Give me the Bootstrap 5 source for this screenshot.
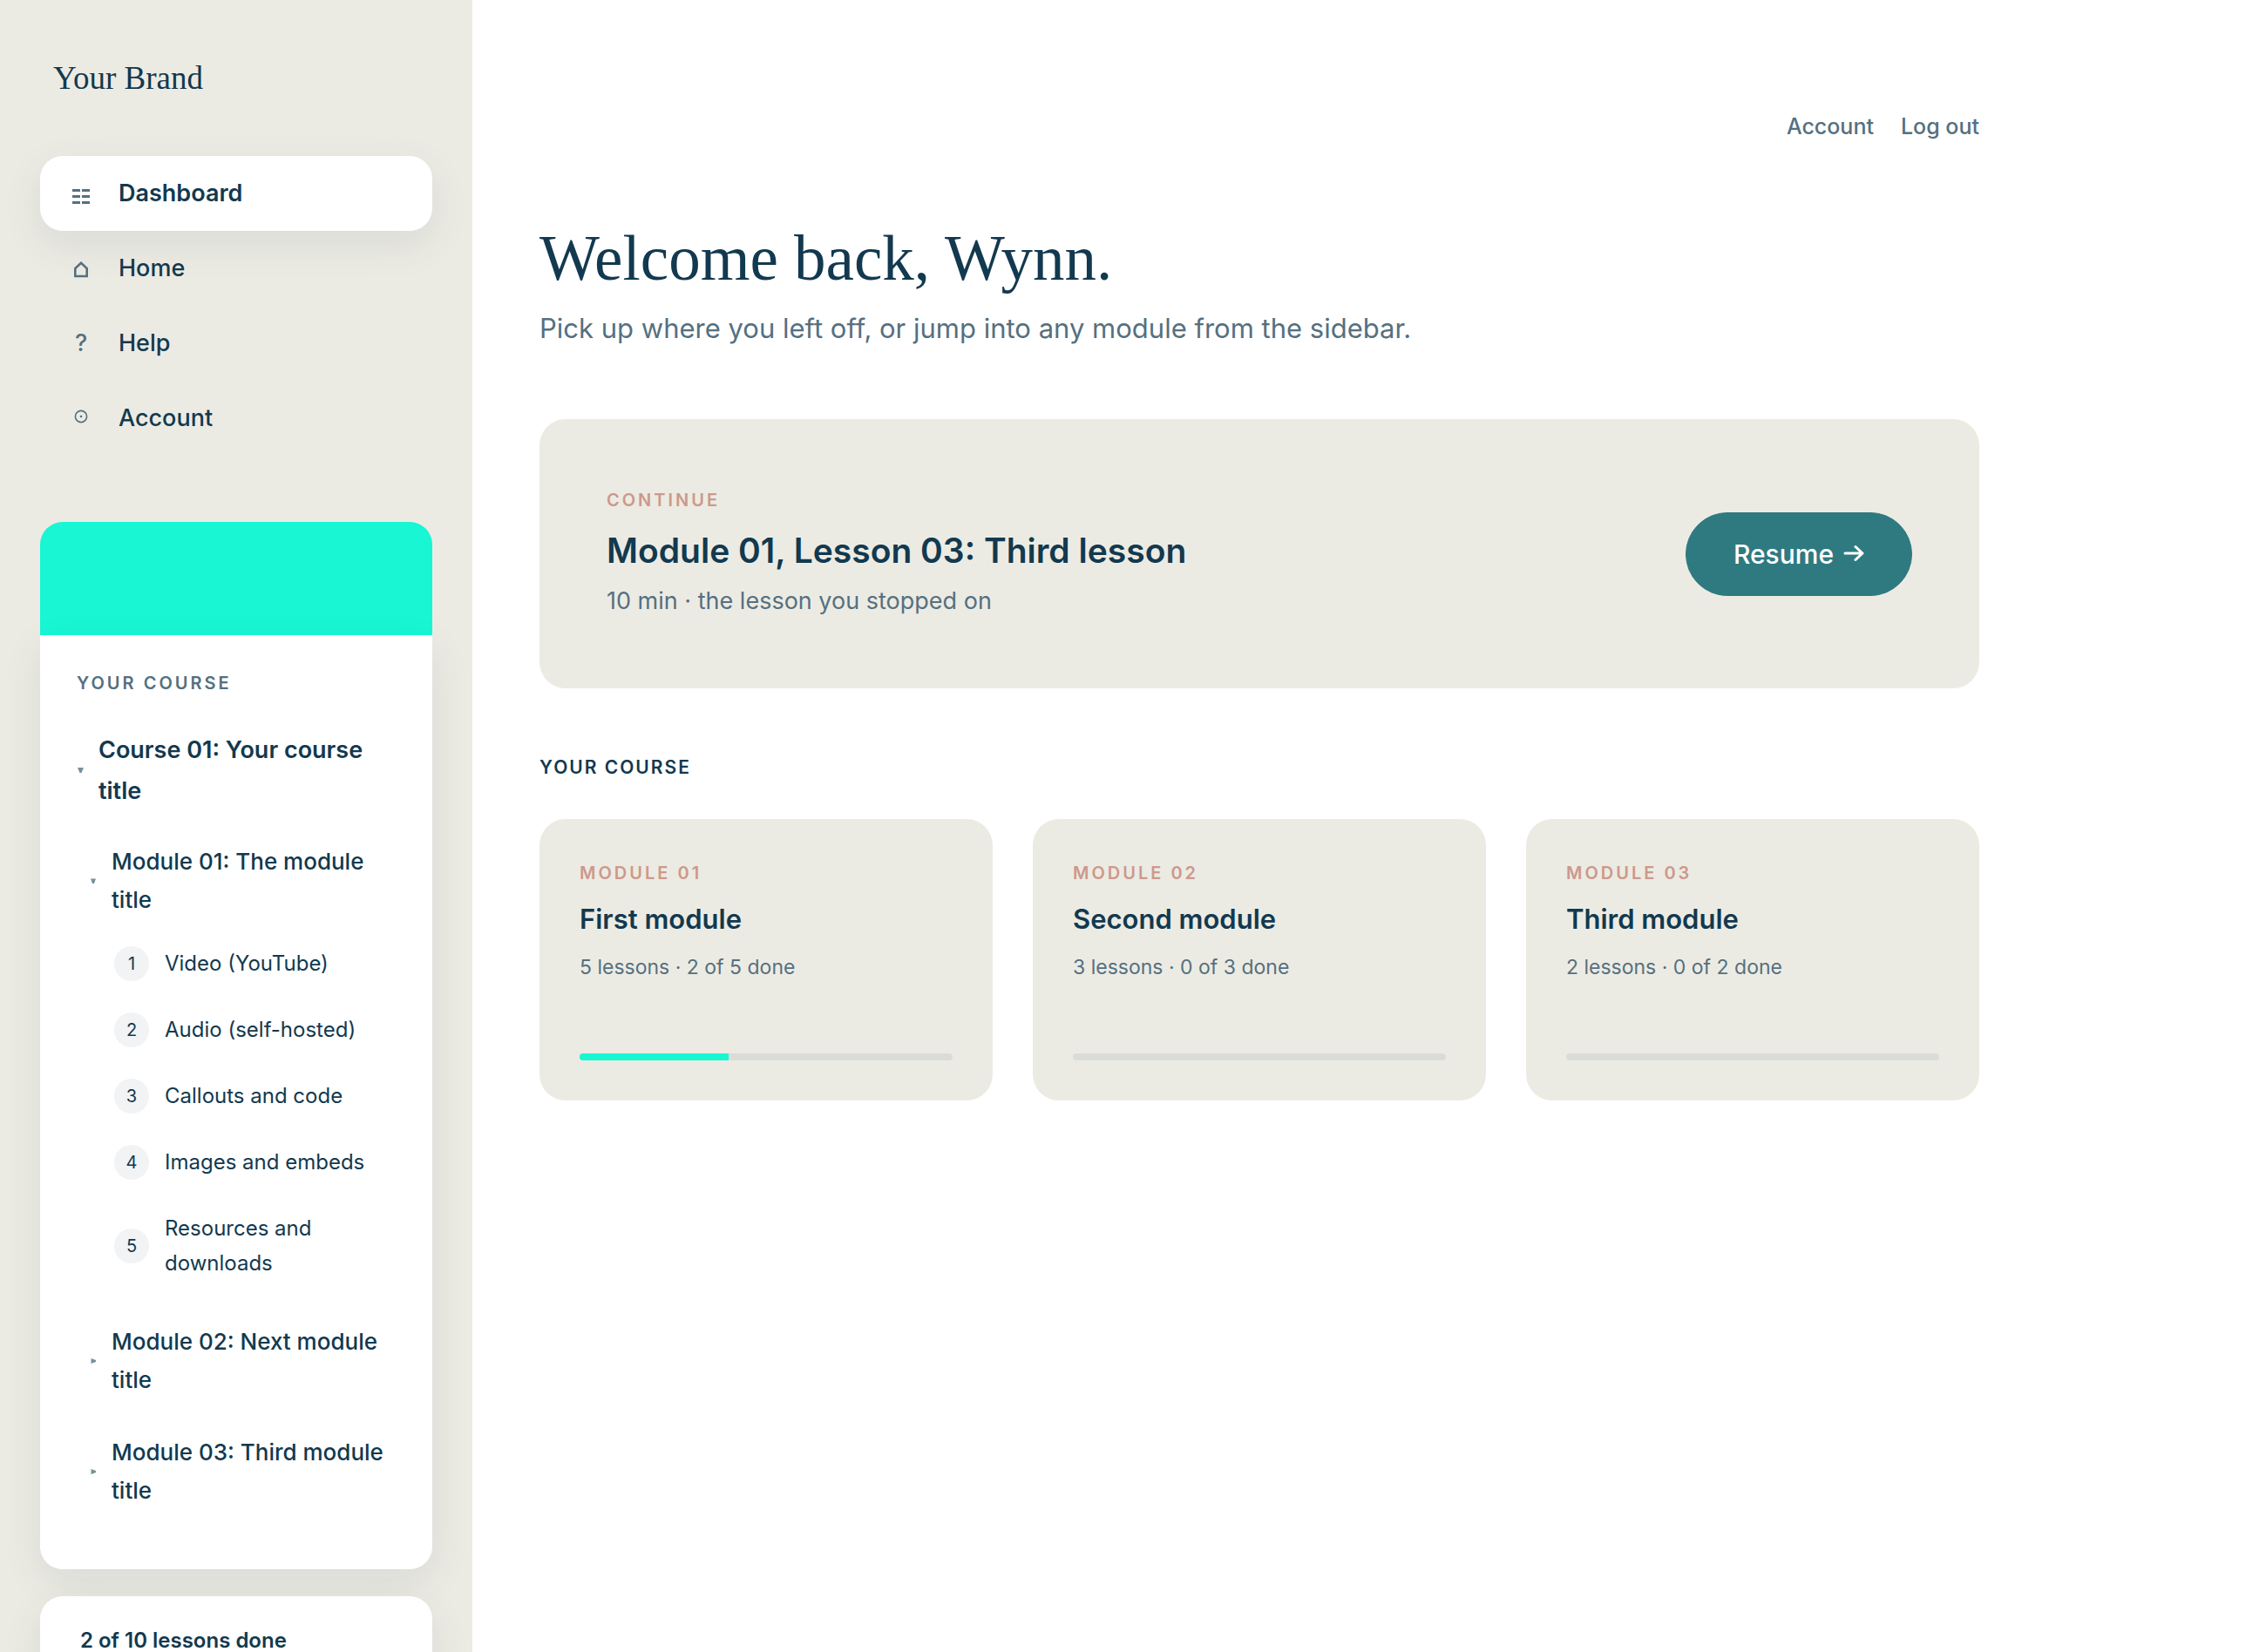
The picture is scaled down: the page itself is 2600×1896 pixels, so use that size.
<!DOCTYPE html>
<html lang="en">
<head>
<meta charset="utf-8">
<meta name="viewport" content="width=device-width, initial-scale=1">
<title>Dashboard - Your Brand</title>
<link href="https://cdn.jsdelivr.net/npm/bootstrap@5.3.0/dist/css/bootstrap.min.css" rel="stylesheet">
<style>
:root{
  --navy:#12394f;
  --slate:#557080;
  --sand:#ecebe3;
  --mint:#18f6d3;
  --teal:#2f7a80;
  --rose:#cc998c;
}
body{font-family:Inter,sans-serif;color:var(--navy);background:#fff}
a{color:inherit;text-decoration:none}

/* Sidebar */
.side-panel{flex:0 0 542px;background:var(--sand);padding:46px;position:sticky;top:0}
.brand-name{font-family:"Liberation Serif",serif;font-size:37px;line-height:56px;padding:16px 15px;margin-bottom:45px}
.side-nav{margin-bottom:76px}
.side-item{height:86px;padding:0 31px;gap:27px;font-size:27px;line-height:40px;font-weight:500;border-radius:26px}
.side-item.active{background:#fff;font-weight:600;box-shadow:0 15px 46px rgba(18,57,79,.09)}
.side-glyph{width:32px;color:var(--slate);text-align:center}
.side-glyph svg{display:block;margin:auto}
.soft-card{background:#fff;border-radius:26px;box-shadow:0 15px 46px rgba(18,57,79,.09)}
.cover-art{height:130px;background:var(--mint);border-radius:26px 26px 0 0}
.course-tree{border-radius:0 0 26px 26px;padding:39px 31px 55px 42px}
.eyebrow{font-size:20px;line-height:32px;font-weight:600;letter-spacing:3px;text-transform:uppercase}
.slate{color:var(--slate)}
.rose{color:var(--rose)}
.fold-btn{border:0;background:none;padding:13px 0;gap:17px;color:inherit;text-align:left}
.fold-btn svg{flex:none;color:#78909c}
.fold-course{font-size:27px;line-height:47px;font-weight:600;margin:24px 0 10px}
.fold-module{font-size:26px;line-height:44px;font-weight:500;margin-left:15px;margin-bottom:13px}
.fold-module[aria-expanded="true"]{margin-bottom:0}
.lesson-list{margin:0 0 17px 43px}
.lesson-link{padding:18px 0;gap:18px;font-size:24px;line-height:40px}
.lesson-num{flex:none;width:40px;height:40px;font-size:20px;background:#f1f3f5}
.progress-note{margin-top:31px;padding:39px 46px;font-size:24px;line-height:24px;font-weight:600;min-height:130px}

/* Main column */
.main-pane{padding:125px 77px 77px;min-width:0}
.main-inner{max-width:1652px}
.top-links{gap:31px;font-size:25px;line-height:40px;font-weight:500;margin-bottom:88px}
.page-title{font-family:"Liberation Serif",serif;font-size:73px;line-height:88px;font-weight:400;margin:0 0 10px}
.page-sub{font-size:31px;line-height:52px;margin:0 0 78px}
.resume-card{background:var(--sand);border-radius:30px;padding:77px}
.resume-title{font-size:39px;line-height:60px;font-weight:600;margin:12px 0 5px}
.resume-meta{font-size:27px;line-height:46px;margin:0}
.resume-btn{--bs-btn-color:#fff;--bs-btn-bg:var(--teal);--bs-btn-border-color:var(--teal);--bs-btn-hover-color:#fff;--bs-btn-hover-bg:#27686d;--bs-btn-font-size:30px;--bs-btn-line-height:44px;--bs-btn-padding-x:54px;--bs-btn-padding-y:25px;--bs-btn-font-weight:500;gap:11px}
.section-label{font-size:21px;line-height:32px;font-weight:600;letter-spacing:2px;text-transform:uppercase;margin:75px 0 43px}
.module-row{--bs-gutter-x:46px;--bs-gutter-y:46px}
.module-card{background:var(--sand);border-radius:30px;padding:46px}
.module-title{font-size:31px;line-height:44px;font-weight:600;margin:15px 0 13px}
.module-meta{font-size:23px;line-height:40px;margin:0 0 79px}
.module-bar{height:8px;border-radius:4px;background:#dadcd8}
.module-bar .progress-bar{background:var(--mint)}
</style>
</head>
<body>
<div class="d-flex">
  <aside class="side-panel vh-100 overflow-hidden d-flex flex-column">
    <div class="brand-name flex-shrink-0">Your Brand</div>

    <nav class="side-nav flex-shrink-0" aria-label="Primary">
      <a class="side-item active d-flex align-items-center" href="#" aria-current="page">
        <span class="side-glyph"><svg width="20" height="24" viewBox="0 0 20 24" aria-hidden="true"><path fill="currentColor" d="M0 7h9v3H0zM11 7h9v3h-9zM0 14h9v3H0zM11 14h9v3h-9zM0 21h9v3H0zM11 21h9v3h-9z"/></svg></span>
        <span>Dashboard</span>
      </a>
      <a class="side-item d-flex align-items-center" href="#">
        <span class="side-glyph"><svg width="20" height="24" viewBox="0 0 20 24" aria-hidden="true"><path fill="none" stroke="currentColor" stroke-width="2.600" d="M3.300 21V12L10 5.800 16.700 12V21z"/></svg></span>
        <span>Home</span>
      </a>
      <a class="side-item d-flex align-items-center" href="#">
        <span class="side-glyph" aria-hidden="true">?</span>
        <span>Help</span>
      </a>
      <a class="side-item d-flex align-items-center" href="#">
        <span class="side-glyph"><svg width="20" height="24" viewBox="0 0 20 24" aria-hidden="true"><circle cx="10" cy="10" r="6.600" fill="none" stroke="currentColor" stroke-width="1.600"/><circle cx="10" cy="10" r="1.300" fill="currentColor"/></svg></span>
        <span>Account</span>
      </a>
    </nav>

    <div class="cover-art flex-shrink-0"></div>
    <div class="soft-card course-tree flex-shrink-0">
      <div class="eyebrow slate">Your course</div>
      <button class="fold-btn fold-course d-flex align-items-center" type="button" aria-expanded="true">
        <svg width="8" height="8" viewBox="0 0 8 8" aria-hidden="true"><path fill="currentColor" d="M1 1h7L5.500 7h-2z"/></svg>
        <span>Course 01: Your course title</span>
      </button>
      <button class="fold-btn fold-module d-flex align-items-center" type="button" aria-expanded="true">
        <svg width="8" height="8" viewBox="0 0 8 8" aria-hidden="true"><path fill="currentColor" d="M1 1.500h6L5 7H3z"/></svg>
        <span>Module 01: The module title</span>
      </button>
      <div class="lesson-list">
        <a class="lesson-link d-flex align-items-center" href="#"><span class="lesson-num rounded-circle text-center">1</span><span>Video (YouTube)</span></a>
        <a class="lesson-link d-flex align-items-center" href="#"><span class="lesson-num rounded-circle text-center">2</span><span>Audio (self-hosted)</span></a>
        <a class="lesson-link d-flex align-items-center" href="#"><span class="lesson-num rounded-circle text-center">3</span><span>Callouts and code</span></a>
        <a class="lesson-link d-flex align-items-center" href="#"><span class="lesson-num rounded-circle text-center">4</span><span>Images and embeds</span></a>
        <a class="lesson-link d-flex align-items-center" href="#"><span class="lesson-num rounded-circle text-center">5</span><span>Resources and downloads</span></a>
      </div>
      <button class="fold-btn fold-module d-flex align-items-center" type="button" aria-expanded="false">
        <svg width="8" height="8" viewBox="0 0 8 8" aria-hidden="true"><path fill="currentColor" d="M1.500 1v6L7 5V3z"/></svg>
        <span>Module 02: Next module title</span>
      </button>
      <button class="fold-btn fold-module d-flex align-items-center mb-0" type="button" aria-expanded="false">
        <svg width="8" height="8" viewBox="0 0 8 8" aria-hidden="true"><path fill="currentColor" d="M1.500 1v6L7 5V3z"/></svg>
        <span>Module 03: Third module title</span>
      </button>
    </div>

    <div class="soft-card progress-note flex-shrink-0">2 of 10 lessons done</div>
  </aside>

  <main class="main-pane flex-grow-1">
    <div class="main-inner">
      <div class="top-links slate d-flex justify-content-end">
        <a href="#">Account</a>
        <a href="#">Log out</a>
      </div>

      <h1 class="page-title">Welcome back, Wynn.</h1>
      <p class="page-sub slate">Pick up where you left off, or jump into any module from the sidebar.</p>

      <section class="resume-card d-flex flex-wrap align-items-center justify-content-between gap-4">
        <div>
          <div class="eyebrow rose">Continue</div>
          <h2 class="resume-title">Module 01, Lesson 03: Third lesson</h2>
          <p class="resume-meta slate">10 min · the lesson you stopped on</p>
        </div>
        <button class="btn resume-btn rounded-pill d-flex align-items-center" type="button">
          Resume
          <svg width="24" height="20" viewBox="0 0 24 20" fill="none" stroke="currentColor" stroke-width="3" stroke-linecap="round" stroke-linejoin="round" aria-hidden="true"><path d="M2 9h20M14 1.500L22 9l-8 7.500"/></svg>
        </button>
      </section>

      <h2 class="section-label">Your course</h2>
      <div class="row row-cols-1 row-cols-xl-3 module-row">
        <div class="col">
          <article class="module-card h-100">
            <div class="eyebrow rose">Module 01</div>
            <h3 class="module-title">First module</h3>
            <p class="module-meta slate">5 lessons · 2 of 5 done</p>
            <div class="progress module-bar" role="progressbar" aria-label="Module 01" aria-valuenow="40" aria-valuemin="0" aria-valuemax="100"><div class="progress-bar" style="width:40%"></div></div>
          </article>
        </div>
        <div class="col">
          <article class="module-card h-100">
            <div class="eyebrow rose">Module 02</div>
            <h3 class="module-title">Second module</h3>
            <p class="module-meta slate">3 lessons · 0 of 3 done</p>
            <div class="progress module-bar" role="progressbar" aria-label="Module 02" aria-valuenow="0" aria-valuemin="0" aria-valuemax="100"><div class="progress-bar" style="width:0%"></div></div>
          </article>
        </div>
        <div class="col">
          <article class="module-card h-100">
            <div class="eyebrow rose">Module 03</div>
            <h3 class="module-title">Third module</h3>
            <p class="module-meta slate">2 lessons · 0 of 2 done</p>
            <div class="progress module-bar" role="progressbar" aria-label="Module 03" aria-valuenow="0" aria-valuemin="0" aria-valuemax="100"><div class="progress-bar" style="width:0%"></div></div>
          </article>
        </div>
      </div>
    </div>
  </main>
</div>
<script src="https://cdn.jsdelivr.net/npm/bootstrap@5.3.0/dist/js/bootstrap.bundle.min.js"></script>
</body>
</html>
